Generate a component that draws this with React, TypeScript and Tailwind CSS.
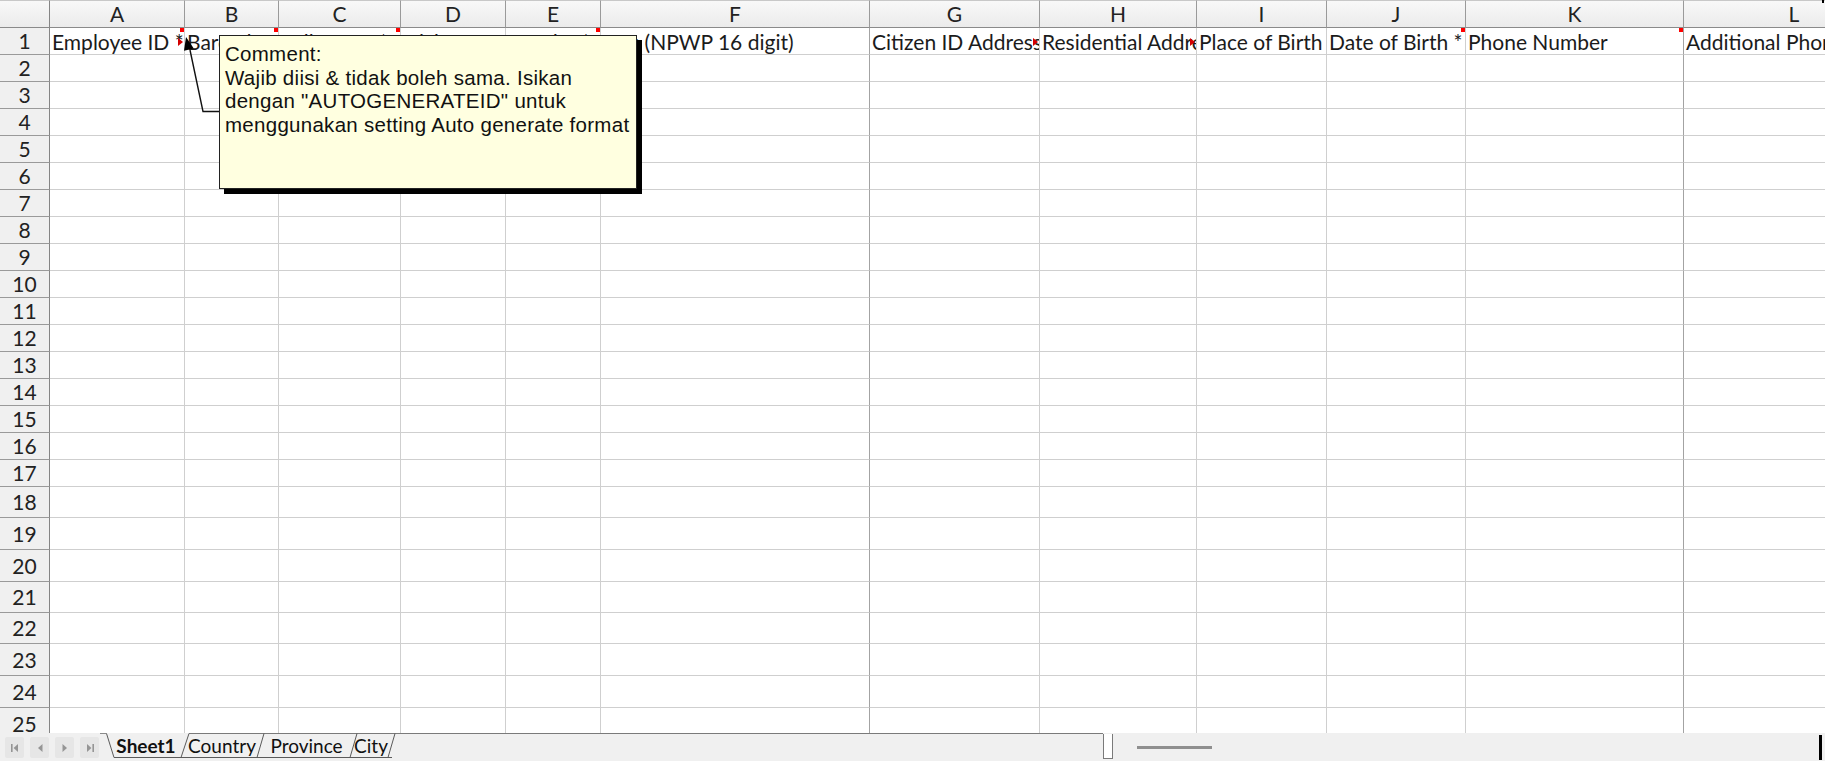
import React from "react";

// Spreadsheet columns A..L (widths live in the grid template below)
const COLS = ["A", "B", "C", "D", "E", "F", "G", "H", "I", "J", "K", "L"];
const ROW_COUNT = 25;

// Columns whose right edge carries a page-break rule
const BREAK_COLS = new Set([5, 10]);

type HeadCell = { text: string; clip?: boolean; note?: boolean };

const FIRST_ROW: HeadCell[] = [
  { text: "Employee ID *", clip: true, note: true },
  { text: "Barcode", note: true },
  { text: "Full Name *", note: true },
  { text: "Nickname" },
  { text: "Gender *", note: true },
  { text: "Tax: (NPWP 16 digit)" },
  { text: "Citizen ID Address", clip: true },
  { text: "Residential Address", clip: true },
  { text: "Place of Birth" },
  { text: "Date of Birth *", note: true },
  { text: "Phone Number", note: true },
  { text: "Additional Phone Number" },
];

const cellFont = "font-['Lato','Open_Sans',sans-serif]";

function ColumnHeader({ label, last }: { label: string; last: boolean }) {
  return (
    <div
      className={`flex items-center justify-center border-t border-t-[#c8c8c8] border-b border-b-[#8a8a8a] ${
        last ? "" : "border-r border-r-[#9a9a9a]"
      } bg-gradient-to-b from-[#f8f8f8] to-[#ebebeb] text-[21px] leading-[24px] text-[#222]`}
    >
      {label}
    </div>
  );
}

function RowHeader({ n }: { n: number }) {
  return (
    <div className="flex items-center justify-center border-r border-r-[#858585] border-b border-b-[#9a9a9a] bg-[#f0f0f0] text-[21px] leading-[24px] text-[#222]">
      {n}
    </div>
  );
}

function BodyCell({ col, cell }: { col: number; cell?: HeadCell }) {
  const rule = BREAK_COLS.has(col) ? "border-r-[#a3a3a3]" : "border-r-[#cfcfcf]";
  return (
    <div className={`relative border-r ${rule} border-b border-b-[#cfcfcf] bg-white`}>
      {cell && (
        <div
          className={`h-full overflow-hidden whitespace-nowrap pl-[2px] pt-[2px] text-[21px] leading-[24px] text-[#1b1b1b] ${
            cell.clip ? "pr-[6px]" : ""
          }`}
        >
          {cell.text}
        </div>
      )}
      {cell?.clip && (
        <span className="absolute right-[1px] top-[10px] h-0 w-0 border-y-[4px] border-l-[5px] border-y-transparent border-l-[#d40000]" />
      )}
      {cell?.note && <span className="absolute right-0 top-0 h-[4px] w-[4px] bg-[#ff0000]" />}
    </div>
  );
}

function Grid() {
  const cells: React.ReactNode[] = [];
  cells.push(
    <div
      key="corner"
      className="border-t border-t-[#c8c8c8] border-r border-r-[#858585] border-b border-b-[#8a8a8a] bg-gradient-to-b from-[#f8f8f8] to-[#ebebeb]"
    />
  );
  COLS.forEach((c, i) => cells.push(<ColumnHeader key={`h${c}`} label={c} last={i === COLS.length - 1} />));
  for (let r = 1; r <= ROW_COUNT; r++) {
    cells.push(<RowHeader key={`r${r}`} n={r} />);
    COLS.forEach((c, i) =>
      cells.push(<BodyCell key={`${c}${r}`} col={i} cell={r === 1 ? FIRST_ROW[i] : undefined} />)
    );
  }
  return (
    <div className="grid w-max grid-cols-[50px_135px_94px_122px_105px_95px_269px_170px_157px_130px_139px_218px_220px] grid-rows-[28px_repeat(17,27px)_31px_32px_32px_31px_31px_32px_32px_32px]">
      {cells}
    </div>
  );
}

function NavButton({ kind }: { kind: "first" | "prev" | "next" | "last" }) {
  return (
    <div className="flex h-[21px] w-[19px] items-center justify-center rounded-[2px] bg-[#e6e6e6]">
      <svg width="10" height="10" viewBox="0 0 10 10" fill="#959595">
        {kind === "first" && (
          <>
            <rect x="1" y="1" width="1.6" height="8" />
            <path d="M8 1 L3.6 5 L8 9 Z" />
          </>
        )}
        {kind === "prev" && <path d="M7.5 1 L3 5 L7.5 9 Z" />}
        {kind === "next" && <path d="M2.5 1 L7 5 L2.5 9 Z" />}
        {kind === "last" && (
          <>
            <path d="M2 1 L6.4 5 L2 9 Z" />
            <rect x="7.4" y="1" width="1.6" height="8" />
          </>
        )}
      </svg>
    </div>
  );
}

function TabBar() {
  return (
    <div className="flex h-[28px] bg-[#f0f0f0]">
      <div className="flex w-[100px] items-start gap-[6px] pl-[5px] pt-[4px]">
        <NavButton kind="first" />
        <NavButton kind="prev" />
        <NavButton kind="next" />
        <NavButton kind="last" />
      </div>
      <div className="relative w-[1003px]">
        <svg className="absolute left-0 top-0" width="1003" height="28" viewBox="0 0 1003 28">
          <g stroke="#5a5a5a" strokeWidth="1" fill="none">
            <path d="M0 0.5 H6.5" stroke="#8a8a8a" />
            <path d="M89 0.5 H1003" stroke="#7a7a7a" />
            <path d="M6.5 0.5 L14 24.5 H292" />
            <path d="M81 24.5 L89 0.5" />
            <path d="M157 24.5 L164 0.5" />
            <path d="M250 24.5 L257 0.5" />
            <path d="M288 24.5 L295 0.5" />
          </g>
        </svg>
        <div className={`relative flex h-[25px] items-center pl-[6px] ${cellFont} text-[19px] leading-[24px] text-[#111]`}>
          <div className="flex w-[80px] justify-center font-bold">Sheet1</div>
          <div className="flex w-[72px] justify-center">Country</div>
          <div className="flex w-[97px] justify-center">Province</div>
          <div className="flex w-[32px] justify-center">City</div>
        </div>
      </div>
      <div className="mt-[1px] h-[25px] w-[10px] border-x border-b border-[#7a7a7a] bg-white" />
      <div className="flex flex-1 items-start">
        <div className="ml-[24px] mt-[13px] h-[3px] w-[75px] bg-[#8f8f8f]" />
      </div>
      <div className="mr-[3px] mt-[2px] h-[25px] w-[3px] bg-black" />
    </div>
  );
}

function CommentCallout() {
  return (
    <>
      <svg className="pointer-events-none absolute left-0 top-0" width="230" height="120" viewBox="0 0 230 120">
        <polyline points="220,111.5 203,111.5 190,50" fill="none" stroke="#111" strokeWidth="1.4" />
        <polygon points="186,37 193.8,48.6 184,50.8" fill="#000" />
      </svg>
      <div className="absolute left-[219px] top-[35px] h-[154px] w-[418px] border border-[#222] bg-[#ffffe0] pl-[5px] pt-[6px] shadow-[5px_5px_0_#000] font-['Liberation_Sans','Arial',sans-serif] text-[20.5px] leading-[23.6px] tracking-[0.28px] text-[#111]">
        <div className="whitespace-nowrap">Comment:</div>
        <div className="whitespace-nowrap">Wajib diisi &amp; tidak boleh sama. Isikan</div>
        <div className="whitespace-nowrap">dengan "AUTOGENERATEID" untuk</div>
        <div className="whitespace-nowrap">menggunakan setting Auto generate format</div>
      </div>
    </>
  );
}

export default function App() {
  return (
    <div className={`relative h-[761px] w-[1825px] overflow-hidden bg-white ${cellFont}`}>
      <div className="h-[733px] overflow-hidden">
        <Grid />
      </div>
      <TabBar />
      <CommentCallout />
      <div className="absolute right-[1px] top-0 h-[3px] w-[2px] bg-black" />
    </div>
  );
}
